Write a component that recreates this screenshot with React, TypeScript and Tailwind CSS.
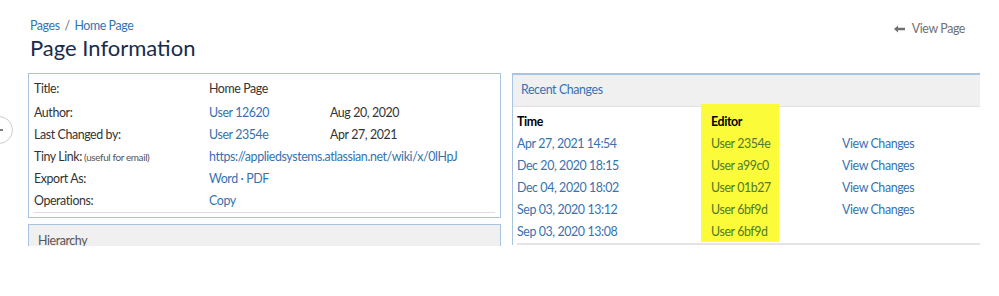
import React from 'react';

const font = { fontFamily: 'Lato, "Open Sans", Arial, sans-serif' };

const infoRows = [
  { label: 'Title:', value: 'Home Page', link: false, date: '' },
  { label: 'Author:', value: 'User 12620', link: true, date: 'Aug 20, 2020' },
  { label: 'Last Changed by:', value: 'User 2354e', link: true, date: 'Apr 27, 2021' },
  { label: 'Tiny Link:', note: '(useful for email)', value: 'https://appliedsystems.atlassian.net/wiki/x/0lHpJ', link: true, date: '' },
  { label: 'Export As:', value: 'Word · PDF', link: true, date: '' },
  { label: 'Operations:', value: 'Copy', link: true, date: '' },
];

const changes = [
  { time: 'Apr 27, 2021 14:54', editor: 'User 2354e', view: true },
  { time: 'Dec 20, 2020 18:15', editor: 'User a99c0', view: true },
  { time: 'Dec 04, 2020 18:02', editor: 'User 01b27', view: true },
  { time: 'Sep 03, 2020 13:12', editor: 'User 6bf9d', view: true },
  { time: 'Sep 03, 2020 13:08', editor: 'User 6bf9d', view: false },
];

export default function App() {
  return (
    <div className="relative w-[999px] h-[296px] bg-white overflow-hidden text-[12.4px] tracking-[-0.4px] text-[#333]" style={font}>
      {/* collapse sidebar button */}
      <div className="absolute left-[-15px] top-[116px] w-[28px] h-[28px] rounded-full border border-[#ccc] bg-white flex items-center justify-end pr-[9px]">
        <svg width="8" height="8" viewBox="0 0 8 8" fill="none" stroke="#555" strokeWidth="1.3">
          <path d="M8 4H1M3.5 1.5L1 4l2.5 2.5" />
        </svg>
      </div>

      <div className="h-[246px] overflow-hidden">
        {/* header */}
        <div className="flex justify-between pl-[30px] pr-[34px] pt-[18px]">
          <div>
            <div className="leading-[16px] text-[#3572b0]">
              Pages <span className="text-[#707070] mx-[2px]">/</span> Home Page
            </div>
            <h1 className="text-[22px] tracking-normal leading-[28px] text-[#172b4d] font-normal">Page Information</h1>
          </div>
          <div className="flex items-center gap-[7px] text-[#707070] pt-[3px] h-[19px]">
            <svg width="11" height="8" viewBox="0 0 11 8" fill="#707070">
              <path d="M0 4L4 0.5V2.8H11V5.2H4V7.5Z" />
            </svg>
            <span>View Page</span>
          </div>
        </div>

        {/* panels */}
        <div className="flex gap-[11px] pl-[28px] mt-[11px]">
          <div className="w-[473px] flex flex-col gap-[6px]">
            <div className="border border-[#a9c4e0] px-[5px] pt-[3px] pb-[4px]">
              {infoRows.map((r, i) => (
                <div key={r.label} className={`flex items-center ${i === 0 ? 'h-[25px]' : 'h-[22px]'}`}>
                  <div className="w-[175px]">
                    {r.label}
                    {r.note && <span className="text-[10px] text-[#555]"> {r.note}</span>}
                  </div>
                  <div className={`w-[121px] whitespace-nowrap ${r.link ? 'text-[#3572b0]' : ''}`}>{r.value}</div>
                  <div>{r.date}</div>
                </div>
              ))}
              <div className="border-b border-[#ddd]" />
            </div>
            <div className="border border-[#a9c4e0] bg-[#f0f0f0] h-[40px] px-[9px] pt-[7px] text-[#555]">Hierarchy</div>
          </div>

          <div className="w-[468px] border-t-2 border-l border-[#a9c4e0] self-start">
            <div className="h-[32px] bg-[#f0f0f0] border-b border-[#e0e0e0] flex items-center pl-[8px] text-[#3572b0]">
              Recent Changes
            </div>
            <div className="flex">
              <div className="w-[188px] pl-[4px] pt-[4px]">
                <div className="h-[22px] flex items-center font-bold text-black">Time</div>
                {changes.map((c, i) => (
                  <div key={i} className="h-[22px] flex items-center text-[#3572b0]">{c.time}</div>
                ))}
              </div>
              <div className="w-[78px] bg-[#fbfb3a] pl-[10px] pt-[7px] -mt-[3px] h-[138px]">
                <div className="h-[22px] flex items-center font-bold text-black">Editor</div>
                {changes.map((c, i) => (
                  <div key={i} className="h-[22px] flex items-center text-[#4f7a2a] whitespace-nowrap">{c.editor}</div>
                ))}
              </div>
              <div className="pl-[63px] pt-[26px]">
                {changes.map((c, i) => (
                  <div key={i} className="h-[22px] flex items-center text-[#3572b0]">{c.view ? 'View Changes' : ''}</div>
                ))}
              </div>
            </div>
            <div className="border-b-2 border-[#e4e4e4] ml-[4px]" />
          </div>
        </div>
      </div>
    </div>
  );
}
